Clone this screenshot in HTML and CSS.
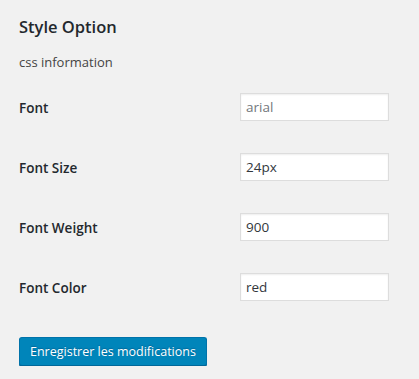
FILE: index.html
```html
<!DOCTYPE html>
<html lang="fr">
<head>
  <meta charset="UTF-8" />
  <meta name="viewport" content="width=device-width, initial-scale=1.0"/>
  <title>Style Option</title>
  <link rel="stylesheet" href="styles.css">
</head>
<body>
  <div class="wrap">
    <h2>Style Option</h2>
    <p class="intro">css information</p>
    <form class="form-table">
      <div class="row">
        <label for="font">Font</label>
        <input id="font" type="text" placeholder="arial" />
      </div>
      <div class="row">
        <label for="font-size">Font Size</label>
        <input id="font-size" type="text" value="24px" />
      </div>
      <div class="row">
        <label for="font-weight">Font Weight</label>
        <input id="font-weight" type="text" value="900" />
      </div>
      <div class="row">
        <label for="font-color">Font Color</label>
        <input id="font-color" type="text" value="red" />
      </div>
      <p class="submit">
        <button type="submit" class="button-primary">Enregistrer les modifications</button>
      </p>
    </form>
  </div>
</body>
</html>
```

FILE: styles.css
```css
body {
  margin: 0;
  background: #f1f1f1;
  color: #23282d;
  font-family: "Open Sans", sans-serif;
  font-size: 13px;
}

.wrap {
  padding: 0 19px;
}

.wrap h2 {
  font-size: 16.5px;
  font-weight: 600;
  margin: 0;
  padding-top: 14px;
  line-height: 26px;
}

.intro {
  margin: 0;
  padding-top: 12px;
  line-height: 20px;
  color: #444;
}

.form-table {
  margin-top: 5px;
}

.row {
  display: grid;
  grid-template-columns: 221px 149px;
  align-items: center;
  height: 60px;
}

.row label {
  font-weight: 600;
  font-size: 13.5px;
  color: #23282d;
  padding-top: 2px;
}

.row input {
  box-sizing: border-box;
  width: 149px;
  height: 28px;
  padding: 3px 5px;
  border: 1px solid #ddd;
  box-shadow: inset 0 1px 2px rgba(0,0,0,0.07);
  background: #fff;
  color: #32373c;
  font-family: inherit;
  font-size: 13.5px;
  outline: none;
}

.row input::placeholder {
  color: #72777c;
}

.submit {
  margin: 0;
  padding-top: 20px;
}

.button-primary {
  height: 29px;
  padding: 0 10px 1px;
  background: #0085ba;
  border: 1px solid #0073aa;
  border-bottom-color: #006799;
  border-radius: 3px;
  box-shadow: 0 1px 0 #006799;
  color: #fff;
  font-family: inherit;
  font-size: 12.5px;
  text-shadow: 0 -1px 1px #006799;
  cursor: pointer;
}
```
